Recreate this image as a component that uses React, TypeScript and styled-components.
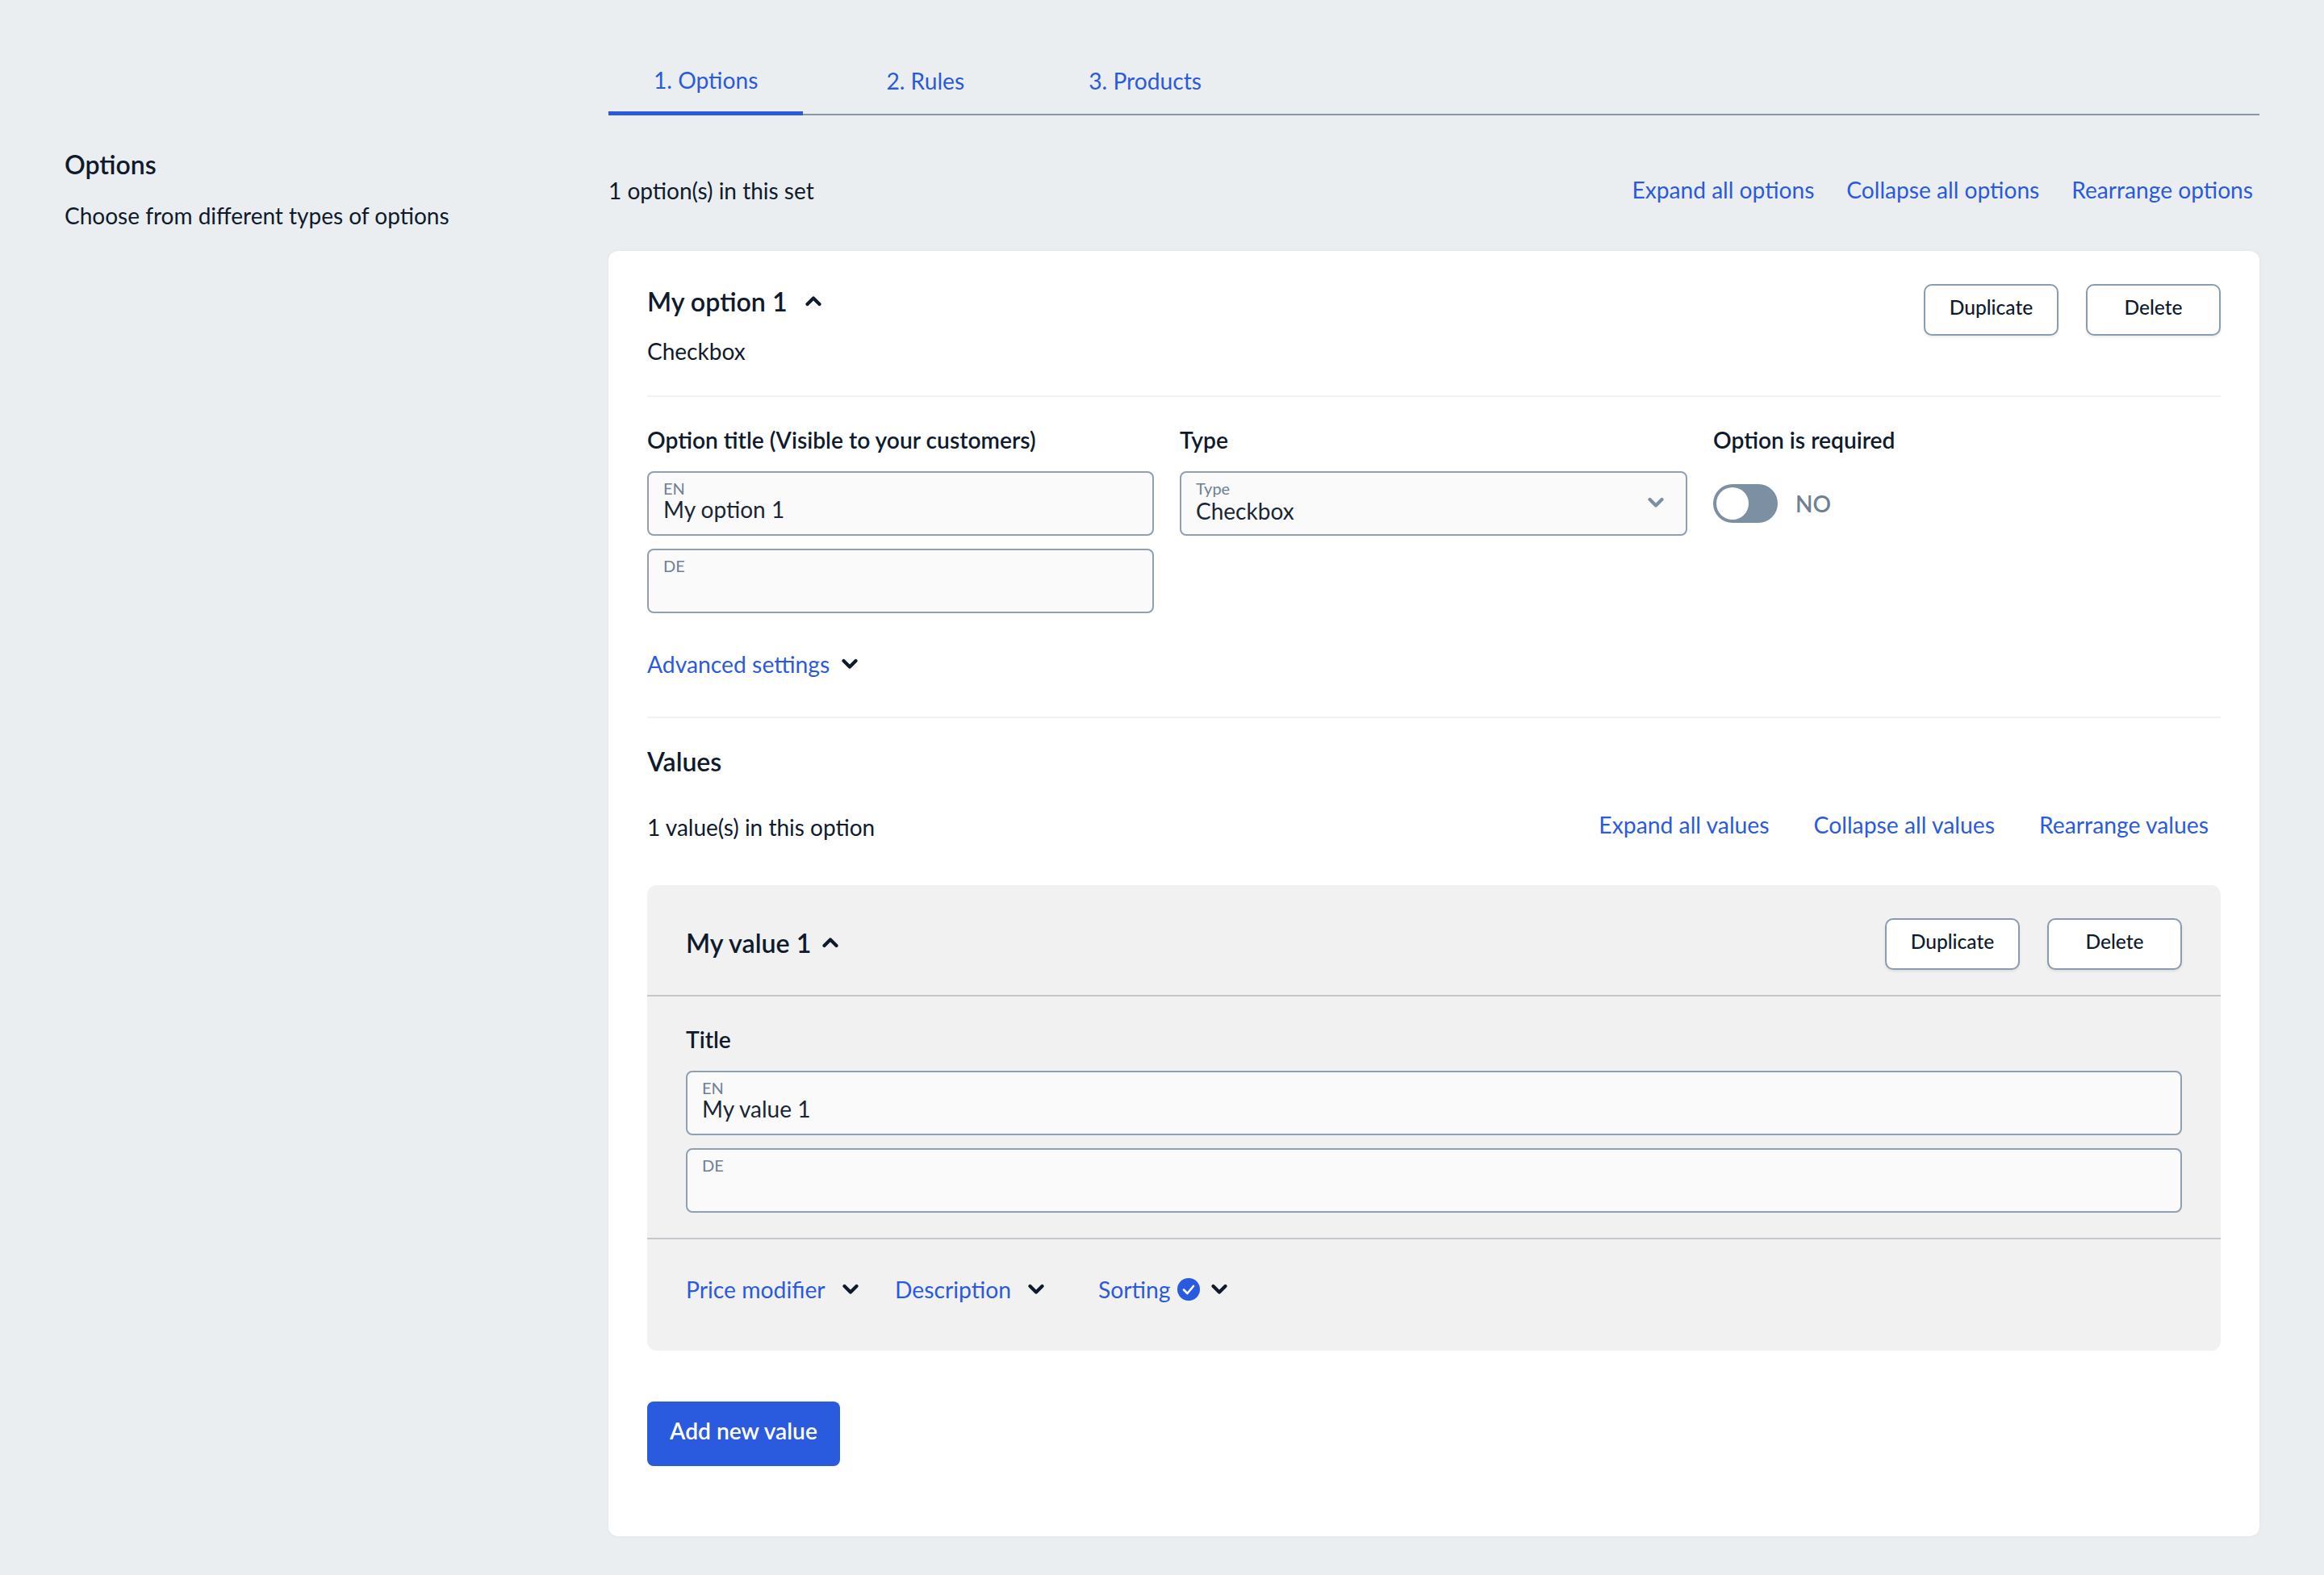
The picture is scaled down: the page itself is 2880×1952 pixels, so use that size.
import React from "react";
import styled, { createGlobalStyle } from "styled-components";

const Global = createGlobalStyle`
  html, body { margin: 0; padding: 0; background: #ebeef1; }
  body { font-family: Lato, "Open Sans", sans-serif; color: #0f1b2d; font-size: 28px; }
  * { box-sizing: border-box; }
`;

const Page = styled.div`
  display: grid;
  grid-template-columns: 674px 2046px;
  padding: 0 80px;
  height: 1952px;
  overflow: hidden;
`;
const Sidebar = styled.aside`
  padding-top: 183px;
`;
const SideTitle = styled.h2`
  margin: 0 0 21px;
  font-size: 32px;
  line-height: 42px;
  font-weight: 600;
`;
const SideText = styled.p`
  margin: 0;
  font-size: 28px;
  line-height: 42px;
`;
const Main = styled.main`
  display: flex;
  flex-direction: column;
`;
const Tabs = styled.nav`
  display: flex;
  align-items: stretch;
  gap: 42px;
  height: 143px;
  padding-top: 58px;
  border-bottom: 2px solid #8a96a4;
`;
const Tab = styled.a<{ $active?: boolean }>`
  display: block;
  padding: ${(p) => (p.$active ? 20 : 21)}px 56px 0;
  margin: 0 ${(p) => (p.$active ? 5 : 0)}px -2px 0;
  font-size: 28.2px;
  line-height: 42px;
  color: #2a5ade;
  border-bottom: 5px solid ${(p) => (p.$active ? "#2a5ade" : "transparent")};
`;
const CountRow = styled.div`
  display: flex;
  align-items: center;
  justify-content: space-between;
  height: 168px;
  padding: 18px 8px 0 0;
`;
const PlainText = styled.span`
  font-size: 28px;
  line-height: 42px;
`;
const Links = styled.div<{ $gap: number; $lift: number; $size: number }>`
  display: flex;
  gap: ${(p) => p.$gap}px;
  margin-top: -${(p) => p.$lift}px;
  font-size: ${(p) => p.$size}px;
`;
const LinkText = styled.a`
  font-size: inherit;
  line-height: 42px;
  color: #2a5ade;
`;
const DisclosureLabel = styled(LinkText)`
  font-size: 28.3px;
`;
const Card = styled.section`
  height: 1593px;
  background: #fff;
  border-radius: 12px;
  padding: 34px 48px 0;
  box-shadow: 0 0 4px rgba(40, 60, 90, 0.06);
`;
const CardHead = styled.div`
  display: flex;
  justify-content: space-between;
  align-items: flex-start;
  height: 147px;
  border-bottom: 2px solid #f1f2f4;
`;
const HeadTitle = styled.div`
  display: flex;
  align-items: center;
  gap: 22px;
  height: 56px;
  font-size: 32.2px;
  font-weight: 600;
`;
const SubType = styled.div`
  font-size: 28px;
  line-height: 42px;
  margin-top: 13px;
`;
const ButtonRow = styled.div`
  display: flex;
  gap: 34px;
  margin-top: 7px;
`;
const ValueButtons = styled(ButtonRow)`
  margin-top: 10px;
`;
const OutlineButton = styled.button`
  width: 167px;
  height: 64px;
  padding: 0 0 8px;
  border: 2px solid #8a9bae;
  border-radius: 10px;
  background: #fff;
  color: #0f1b2d;
  font-family: inherit;
  font-size: 24.6px;
  font-weight: 500;
  box-shadow: 0 2px 3px rgba(40, 60, 90, 0.1);
`;
const FormGrid = styled.div`
  display: grid;
  grid-template-columns: 628px 629px 1fr;
  gap: 32px;
  padding-top: 32px;
`;
const Field = styled.div`
  display: flex;
  flex-direction: column;
  gap: 16px;
`;
const Label = styled.div`
  font-size: 28.2px;
  line-height: 42px;
  font-weight: 600;
  height: 44px;
  margin-bottom: 16px;
`;
const InputBox = styled.div`
  position: relative;
  height: 80px;
  padding: 8px 18px 0;
  background: #fafafa;
  border: 2px solid #8fa0b3;
  border-radius: 8px;
`;
const InputTag = styled.div`
  font-size: 20px;
  line-height: 22px;
  color: #6f8094;
`;
const InputValue = styled.div<{ $select?: boolean }>`
  font-size: 28px;
  line-height: 30px;
  color: #1a2636;
  margin-top: ${(p) => (p.$select ? 2 : 0)}px;
`;
const SelectChevron = styled.span`
  position: absolute;
  right: 27px;
  top: 30px;
  display: flex;
`;
const ToggleRow = styled.div`
  display: flex;
  align-items: center;
  gap: 22px;
  height: 48px;
  padding-top: 0;
  margin-top: 32px;
`;
const ToggleTrack = styled.div`
  display: flex;
  align-items: center;
  width: 80px;
  height: 48px;
  padding: 4px;
  background: #7d8fa3;
  border-radius: 24px;
`;
const ToggleKnob = styled.div`
  width: 40px;
  height: 40px;
  background: #fff;
  border-radius: 50%;
`;
const ToggleText = styled.span`
  font-size: 28px;
  font-weight: 600;
  color: #6f8094;
`;
const DisclosureRow = styled.div`
  display: flex;
  align-items: center;
  gap: 15px;
  height: 42px;
  margin-top: 42px;
`;
const SectionBreak = styled.div`
  margin-top: 44px;
  border-bottom: 2px solid #f1f2f4;
`;
const ValuesTitle = styled.h3`
  margin: 32px 0 0;
  font-size: 32px;
  line-height: 44px;
  font-weight: 600;
`;
const ValuesRow = styled.div`
  display: flex;
  align-items: center;
  justify-content: space-between;
  height: 60px;
  margin-top: 29px;
  padding-right: 15px;
`;
const ValuePanel = styled.div`
  margin-top: 42px;
  height: 577px;
  background: #f1f1f1;
  border-radius: 12px;
`;
const ValueHead = styled.div`
  display: flex;
  align-items: center;
  justify-content: space-between;
  height: 138px;
  padding: 0 48px;
  border-bottom: 2px solid #c4c7cb;
`;
const ValueTitle = styled(HeadTitle)`
  gap: 14px;
  margin-top: 6px;
`;
const ValueBody = styled.div`
  padding: 32px 48px 31px;
  display: flex;
  flex-direction: column;
  gap: 16px;
  border-bottom: 2px solid #c4c7cb;
`;
const ValueLabel = styled(Label)`
  margin-bottom: 0;
`;
const Disclosures = styled.div`
  display: flex;
  align-items: center;
  height: 138px;
  padding: 0 48px 14px;
`;
const Disclosure = styled.div<{ $w: number; $gap: number }>`
  display: flex;
  align-items: center;
  gap: ${(p) => p.$gap}px;
  width: ${(p) => p.$w}px;
`;
const BadgeChevron = styled.span`
  display: flex;
  margin-left: 6px;
`;
const AddButton = styled.button`
  display: block;
  width: 239px;
  height: 80px;
  margin-top: 63px;
  padding: 0 0 8px;
  border: none;
  border-radius: 8px;
  background: #2a5ade;
  color: #fff;
  font-family: inherit;
  font-size: 28.2px;
  font-weight: 600;
`;

const Chevron = ({ up, color = "#0f1b2d", w = 20 }: { up?: boolean; color?: string; w?: number }) => (
  <svg width={w} height={14} viewBox="0 0 20 14" fill="none">
    <path
      d={up ? "M2.5 11 L10 3.5 L17.5 11" : "M2.5 3 L10 10.5 L17.5 3"}
      stroke={color}
      strokeWidth={4.2}
      strokeLinecap="round"
      strokeLinejoin="round"
    />
  </svg>
);

const CheckBadge = () => (
  <svg width="28" height="28" viewBox="0 0 28 28">
    <circle cx="14" cy="14" r="14" fill="#2a5ade" />
    <path d="M8 14.5 L12.4 19 L20 10" fill="none" stroke="#fff" strokeWidth="2.6" strokeLinecap="round" strokeLinejoin="round" />
  </svg>
);

const TextInput = ({ tag, value }: { tag: string; value?: string }) => (
  <InputBox>
    <InputTag>{tag}</InputTag>
    {value && <InputValue>{value}</InputValue>}
  </InputBox>
);

export default function App() {
  return (
    <>
      <Global />
      <Page>
        <Sidebar>
          <SideTitle>Options</SideTitle>
          <SideText>Choose from different types of options</SideText>
        </Sidebar>
        <Main>
          <Tabs>
            <Tab $active>1. Options</Tab>
            <Tab>2. Rules</Tab>
            <Tab>3. Products</Tab>
          </Tabs>
          <CountRow>
            <PlainText>1 option(s) in this set</PlainText>
            <Links $gap={40} $lift={2} $size={28.15}>
              <LinkText>Expand all options</LinkText>
              <LinkText>Collapse all options</LinkText>
              <LinkText>Rearrange options</LinkText>
            </Links>
          </CountRow>
          <Card>
            <CardHead>
              <div>
                <HeadTitle>
                  My option 1 <Chevron up />
                </HeadTitle>
                <SubType>Checkbox</SubType>
              </div>
              <ButtonRow>
                <OutlineButton>Duplicate</OutlineButton>
                <OutlineButton>Delete</OutlineButton>
              </ButtonRow>
            </CardHead>
            <FormGrid>
              <div>
                <Label>Option title (Visible to your customers)</Label>
                <Field>
                  <TextInput tag="EN" value="My option 1" />
                  <TextInput tag="DE" />
                </Field>
              </div>
              <div>
                <Label>Type</Label>
                <InputBox>
                  <InputTag>Type</InputTag>
                  <InputValue $select>Checkbox</InputValue>
                  <SelectChevron>
                    <Chevron color="#7d8fa3" />
                  </SelectChevron>
                </InputBox>
              </div>
              <div>
                <Label>Option is required</Label>
                <ToggleRow>
                  <ToggleTrack>
                    <ToggleKnob />
                  </ToggleTrack>
                  <ToggleText>NO</ToggleText>
                </ToggleRow>
              </div>
            </FormGrid>
            <DisclosureRow>
              <DisclosureLabel>Advanced settings</DisclosureLabel>
              <Chevron />
            </DisclosureRow>
            <SectionBreak />
            <ValuesTitle>Values</ValuesTitle>
            <ValuesRow>
              <PlainText>1 value(s) in this option</PlainText>
              <Links $gap={55} $lift={6} $size={28.3}>
                <LinkText>Expand all values</LinkText>
                <LinkText>Collapse all values</LinkText>
                <LinkText>Rearrange values</LinkText>
              </Links>
            </ValuesRow>
            <ValuePanel>
              <ValueHead>
                <ValueTitle>
                  My value 1 <Chevron up />
                </ValueTitle>
                <ValueButtons>
                  <OutlineButton>Duplicate</OutlineButton>
                  <OutlineButton>Delete</OutlineButton>
                </ValueButtons>
              </ValueHead>
              <ValueBody>
                <ValueLabel>Title</ValueLabel>
                <TextInput tag="EN" value="My value 1" />
                <TextInput tag="DE" />
              </ValueBody>
              <Disclosures>
                <Disclosure $w={259} $gap={21}>
                  <DisclosureLabel>Price modifier</DisclosureLabel>
                  <Chevron />
                </Disclosure>
                <Disclosure $w={252} $gap={21}>
                  <DisclosureLabel>Description</DisclosureLabel>
                  <Chevron />
                </Disclosure>
                <Disclosure $w={190} $gap={8}>
                  <DisclosureLabel>Sorting</DisclosureLabel>
                  <CheckBadge />
                  <BadgeChevron>
                    <Chevron />
                  </BadgeChevron>
                </Disclosure>
              </Disclosures>
            </ValuePanel>
            <AddButton>Add new value</AddButton>
          </Card>
        </Main>
      </Page>
    </>
  );
}
